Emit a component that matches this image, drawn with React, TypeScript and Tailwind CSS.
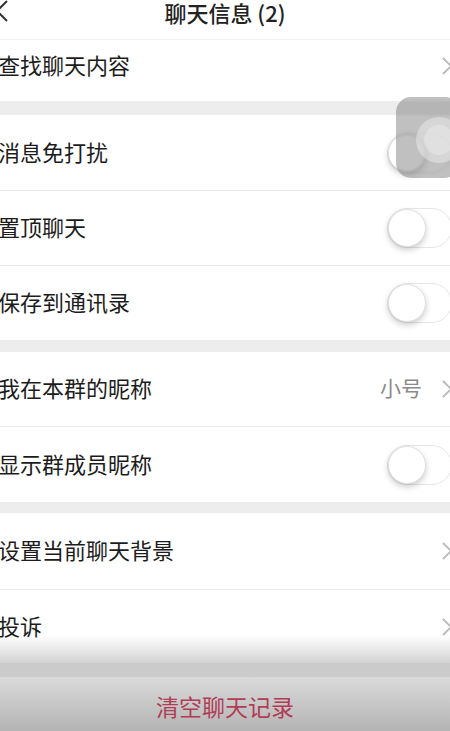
import type { ReactNode } from "react";

// fila de ajustes estilo iOS (la captura está recortada por la izquierda y la derecha)
function Fila({ texto, children, alto = "h-[74px]", extra = "" }: { texto: string; children?: ReactNode; alto?: string; extra?: string }) {
  return (
    <div className={`flex items-center bg-white ${alto} ${extra}`}>
      <span className="-ml-[2px] mb-[4px] text-[22px] leading-none text-[#1c1c1c]">{texto}</span>
      <div className="ml-auto flex items-center">{children}</div>
    </div>
  );
}

function Flecha() {
  return (
    <svg width="10" height="18" viewBox="0 0 10 18" className="-mr-[2px]">
      <polyline points="1,1 9,9 1,17" fill="none" stroke="#b9b9b9" strokeWidth="1.8" />
    </svg>
  );
}

function Interruptor() {
  return (
    <div className="-mr-[2px] flex h-[40px] w-[65px] items-center rounded-full border-[1.5px] border-[#e6e6e6] bg-white">
      <div className="h-[38px] w-[38px] rounded-full border border-[#e0e0e0] bg-white shadow-[0_3px_6px_rgba(0,0,0,0.2)]" />
    </div>
  );
}

const Separador = () => <div className="h-px bg-[#ebebeb]" />;
const Hueco = ({ alto }: { alto: string }) => <div className={`${alto} bg-[#ededed]`} />;

export default function App() {
  return (
    <div className="relative flex h-[731px] w-[450px] flex-col overflow-hidden bg-white" style={{ fontFamily: '"Noto Sans CJK SC", "Noto Sans", sans-serif' }}>
      {/* CABECERA */}
      <header className="relative h-[40px] shrink-0 border-b border-[#f1f1f1] bg-white">
        <svg width="12" height="22" viewBox="0 0 12 22" className="absolute left-[-4px] top-[0px]">
          <polyline points="11,1 1,11 11,21" fill="none" stroke="#333" strokeWidth="2" />
        </svg>
        <div className="flex h-[26px] items-center justify-center">
          <h1 className="mb-[2px] text-[22px] font-medium leading-none text-[#222]">聊天信息 (2)</h1>
        </div>
      </header>

      <Fila texto="查找聊天内容" alto="h-[61px]" extra="pb-[10px]">
        <Flecha />
      </Fila>
      <Hueco alto="h-[14px]" />

      <Fila texto="消息免打扰" alto="h-[75px]"><Interruptor /></Fila>
      <Separador />
      <Fila texto="置顶聊天"><Interruptor /></Fila>
      <Separador />
      <Fila texto="保存到通讯录"><Interruptor /></Fila>
      <Hueco alto="h-[12px]" />

      <Fila texto="我在本群的昵称">
        <span className="mb-[4px] mr-[20px] text-[21px] leading-none text-[#8a8a8a]">小号</span>
        <Flecha />
      </Fila>
      <Separador />
      <Fila texto="显示群成员昵称" alto="h-[75px]"><Interruptor /></Fila>
      <Hueco alto="h-[11px]" />

      <Fila texto="设置当前聊天背景" alto="h-[76px]"><Flecha /></Fila>
      <Separador />
      <Fila texto="投诉" alto="h-[73px]" extra="bg-[linear-gradient(to_bottom,#ffffff_62%,#d3d3d3)]"><Flecha /></Fila>

      {/* BOTÓN DE BORRAR, oscurecido como en la captura */}
      <div className="h-[14px] shrink-0 bg-[#cbcbcb]" />
      <div className="flex flex-1 items-center justify-center bg-[linear-gradient(to_bottom,#dadada,#b4b4b4)]">
        <span className="mt-[4px] text-[23px] leading-none text-[#b03c57]">清空聊天记录</span>
      </div>

      {/* botón flotante de AssistiveTouch */}
      <div className="absolute left-[396px] top-[97px] h-[81px] w-[64px] overflow-hidden rounded-[15px] bg-[rgba(90,90,90,0.38)] backdrop-blur-[1px]">
        <div className="absolute left-[20px] top-[20px] h-[46px] w-[46px] rounded-full bg-white/35" />
        <div className="absolute left-[28px] top-[28px] h-[30px] w-[30px] rounded-full bg-white/25" />
      </div>
    </div>
  );
}
